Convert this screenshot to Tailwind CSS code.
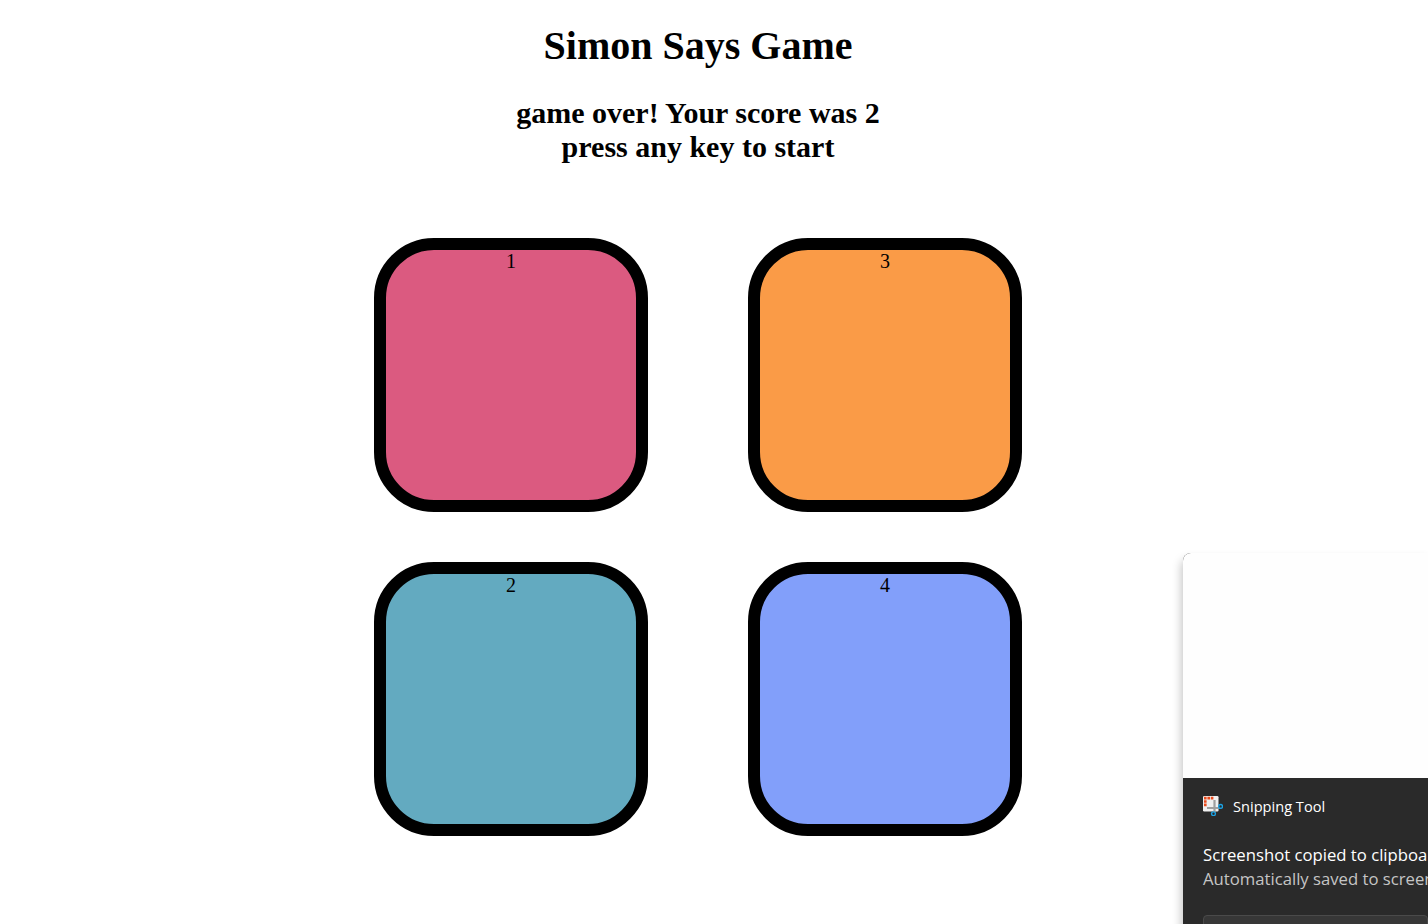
<!doctype html>
<html>
<head>
<meta charset="utf-8">
<script src="https://cdn.jsdelivr.net/npm/@tailwindcss/browser@4"></script>
</head>
<body class="relative h-[924px] w-[1428px] overflow-hidden bg-white font-['Liberation_Serif',serif] text-black">
  <main class="flex w-[1396px] flex-col items-center">
    <h1 class="mt-[23px] text-[40px] leading-[46px] font-bold">Simon Says Game</h1>
    <h2 class="mt-[27px] text-center text-[30px] leading-[34px] font-bold">game over! Your score was 2<br>press any key to start</h2>
    <div class="mt-[74px] grid grid-cols-[274px_274px] gap-x-[100px] gap-y-[50px]">
      <div class="h-[274px] rounded-[60px] border-[12px] border-black bg-[#db5a80] text-center text-[20px] leading-[23px]">1</div>
      <div class="h-[274px] rounded-[60px] border-[12px] border-black bg-[#fa9b47] text-center text-[20px] leading-[23px]">3</div>
      <div class="h-[274px] rounded-[60px] border-[12px] border-black bg-[#63aac0] text-center text-[20px] leading-[23px]">2</div>
      <div class="h-[274px] rounded-[60px] border-[12px] border-black bg-[#829ffa] text-center text-[20px] leading-[23px]">4</div>
    </div>
  </main>
  <aside class="absolute left-[1183px] top-[553px] h-[400px] w-[245px] overflow-hidden rounded-tl-[8px] bg-[#2a2a2a] font-['Open_Sans',sans-serif] shadow-[-2px_6px_10px_rgba(0,0,0,0.22)]">
    <div class="h-[225px] bg-[#fefefe]"></div>
    <div class="flex items-center gap-[10px] pl-[20px] pt-[18px]">
      <svg class="h-[20px] w-[20px]" viewBox="0 0 20 20" fill="none">
        <rect x="0" y="0" width="15.5" height="15.5" rx="1.2" fill="#f0f0f0"/>
        <path d="M1 .8h2.6v2.6H1zM4.4 .8h2.6v2.6H4.4zM7.8 .8h2.6v2.6H7.8zM1 4.2h2.6v2.6H1zM1 7.6h2.6v2.6H1z" fill="#ea4a1c"/>
        <path d="M4 12h13M11.5 4v12.5" stroke="#9f9f9f" stroke-width="2.2"/>
        <circle cx="17.6" cy="10.4" r="1.9" fill="#2a2a2a" stroke="#1ba1e2" stroke-width="1.4"/>
        <circle cx="10.5" cy="17.8" r="1.9" fill="#2a2a2a" stroke="#1ba1e2" stroke-width="1.4"/>
      </svg>
      <span class="text-[14.6px] leading-[20px] text-white">Snipping Tool</span>
    </div>
    <p class="mt-[27px] pl-[20px] text-[16.7px] leading-[24px] whitespace-nowrap text-white">Screenshot copied to clipboard</p>
    <p class="pl-[20px] text-[16.7px] leading-[24px] whitespace-nowrap text-[#c5c5c5]">Automatically saved to screenshots folder</p>
    <div class="ml-[20px] mt-[24px] h-[40px] rounded-[4px] border border-[#4a4a4a] bg-[#373737]"></div>
  </aside>
</body>
</html>
